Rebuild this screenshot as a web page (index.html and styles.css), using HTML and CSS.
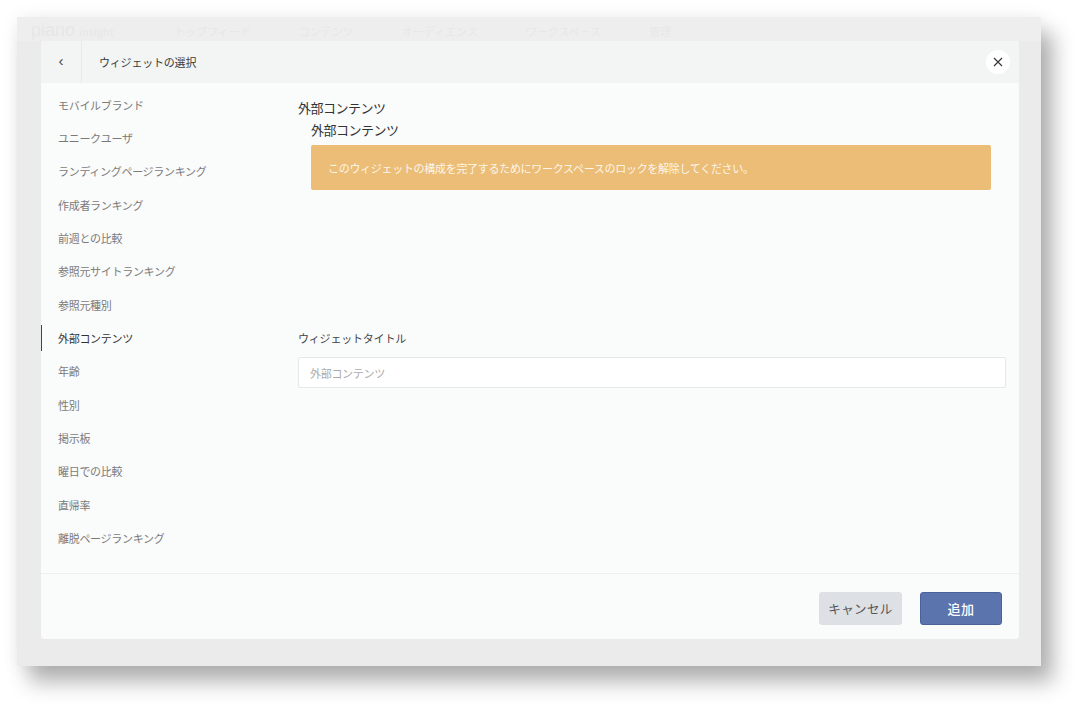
FILE: index.html
```html
<!DOCTYPE html>
<html lang="ja">
<head>
  <meta charset="UTF-8">
  <title>ウィジェットの選択</title>
  <meta name="viewport" content="width=device-width, initial-scale=1.0">
  <link rel="stylesheet" href="styles.css">
</head>
<body>

  <div class="window">
    <!-- 背後のアプリのヘッダー（モーダルで暗くなっている） -->
    <div class="appbar">
      <span class="logo">piano</span><span class="logo-sub">insight</span>
      <span class="nav">トップフィード</span>
      <span class="nav">コンテンツ</span>
      <span class="nav">オーディエンス</span>
      <span class="nav">ワークスペース</span>
      <span class="nav">管理</span>
    </div>

    <div class="modal">
      <div class="modal-header">
        <button class="back">&#8249;</button>
        <span class="modal-title">ウィジェットの選択</span>
        <button class="close">
          <svg width="10" height="10" viewBox="0 0 10 10">
            <path d="M1 1 L9 9 M9 1 L1 9" stroke="#333" stroke-width="1.1" fill="none"/>
          </svg>
        </button>
      </div>

      <div class="modal-body">
        <ul class="widget-list">
          <li>モバイルブランド</li>
          <li>ユニークユーザ</li>
          <li>ランディングページランキング</li>
          <li>作成者ランキング</li>
          <li>前週との比較</li>
          <li>参照元サイトランキング</li>
          <li>参照元種別</li>
          <li class="active">外部コンテンツ</li>
          <li>年齢</li>
          <li>性別</li>
          <li>掲示板</li>
          <li>曜日での比較</li>
          <li>直帰率</li>
          <li>離脱ページランキング</li>
        </ul>

        <div class="widget-config">
          <h2>外部コンテンツ</h2>
          <div class="preview">
            <h3>外部コンテンツ</h3>
            <div class="notice">このウィジェットの構成を完了するためにワークスペースのロックを解除してください。</div>
          </div>

          <label for="widgetTitle">ウィジェットタイトル</label>
          <input type="text" id="widgetTitle" placeholder="外部コンテンツ">
        </div>
      </div>

      <div class="modal-footer">
        <button class="btn btn-cancel">キャンセル</button>
        <button class="btn btn-add">追加</button>
      </div>
    </div>
  </div>

</body>
</html>
```

FILE: styles.css
```css
body {
  margin: 0;
  background-color: #fff;
  font-family: "Noto Sans CJK JP", "Noto Sans", sans-serif;
  width: 1089px;
  height: 714px;
  overflow: hidden;
}

.window {
  margin: 17px 0 0 17px;
  width: 1024px;
  height: 649px;
  background-color: #ebebec;
  box-shadow: 0 0 18px rgba(0, 0, 0, 0.06), 12px 16px 20px rgba(0, 0, 0, 0.3);
  display: flex;
  flex-direction: column;
}

.appbar {
  height: 24px;
  display: flex;
  align-items: center;
  padding-left: 14px;
  background-color: #eeeeef;
  color: #e7e7e8;
  font-size: 11px;
  white-space: nowrap;
  overflow: hidden;
}

.logo {
  font-family: "Liberation Sans", sans-serif;
  font-size: 18px;
  line-height: 20px;
  color: #e6e6e7;
  margin-top: 2px;
}

.logo-sub {
  font-size: 11px;
  margin: 4px 60px 0 4px;
}

.nav {
  margin-right: 48px;
  margin-top: 4px;
}

.modal {
  margin: 0 22px 0 24px;
  height: 598px;
  background-color: #fafbfb;
  border-radius: 3px;
  display: flex;
  flex-direction: column;
  overflow: hidden;
}

.modal-header {
  height: 42px;
  background-color: #f3f4f4;
  display: flex;
  align-items: center;
}

.back {
  width: 41px;
  height: 42px;
  border: none;
  border-right: 1px solid #e8e9e9;
  background: none;
  font-size: 15px;
  color: #444;
  padding: 0 0 3px;
}

.modal-title {
  margin-left: 17px;
  font-size: 11px;
  color: #3a3a3a;
  letter-spacing: -0.2px;
  flex: 1;
}

.close {
  width: 24px;
  height: 24px;
  border-radius: 50%;
  border: none;
  background-color: #fff;
  margin-right: 9px;
  display: flex;
  align-items: center;
  justify-content: center;
  padding: 0;
}

.modal-body {
  flex: 1;
  display: flex;
}

.widget-list {
  list-style: none;
  margin: 0;
  padding: 5px 0 0;
  width: 257px;
}

.widget-list li {
  height: 33.35px;
  display: flex;
  align-items: center;
  padding-left: 17px;
  font-size: 11px;
  color: #7a7a7a;
  letter-spacing: -0.3px;
  position: relative;
}

.widget-list li.active {
  color: #333;
}

.widget-list li.active::before {
  content: "";
  position: absolute;
  left: 0;
  top: 4px;
  bottom: 4px;
  border-left: 1px solid #444;
}

.widget-config {
  flex: 1;
  padding: 16px 13px 0 0;
}

.widget-config h2 {
  margin: 0;
  font-size: 13px;
  font-weight: normal;
  color: #333;
  letter-spacing: -0.5px;
  line-height: 18px;
}

.preview {
  padding-left: 13px;
  height: 209px;
}

.preview h3 {
  margin: 4px 0 0;
  font-size: 13px;
  font-weight: normal;
  color: #333;
  letter-spacing: -0.5px;
  line-height: 18px;
}

.notice {
  margin-top: 6px;
  width: 663px;
  height: 45px;
  padding-left: 17px;
  display: flex;
  align-items: center;
  background-color: #ebbd76;
  border-radius: 2px;
  color: #fdf6ea;
  font-size: 11px;
  letter-spacing: -0.3px;
}

label {
  display: block;
  font-size: 11px;
  color: #444;
  letter-spacing: -0.2px;
  line-height: 16px;
}

input {
  display: block;
  box-sizing: border-box;
  width: 100%;
  height: 31px;
  margin-top: 11px;
  padding: 0 11px;
  border: 1px solid #e6e7e7;
  border-radius: 2px;
  background-color: #fff;
  font-family: inherit;
  font-size: 11px;
  letter-spacing: -0.3px;
}

input::placeholder {
  color: #aaa;
}

.modal-footer {
  height: 66px;
  border-top: 1px solid #eef0f0;
  display: flex;
  justify-content: flex-end;
  align-items: flex-start;
  padding: 18px 17px 0 0;
  box-sizing: border-box;
  gap: 18px;
}

.btn {
  height: 33px;
  border-radius: 3px;
  font-family: inherit;
  font-size: 12.5px;
  letter-spacing: 0.4px;
  cursor: pointer;
}

.btn-cancel {
  width: 83px;
  border: 1px solid #dcdfe3;
  background-color: #dde0e4;
  color: #555;
}

.btn-add {
  width: 82px;
  border: 1px solid #4a629a;
  background-color: #5b74ad;
  color: #fff;
  font-weight: 500;
  font-size: 13px;
}
```
